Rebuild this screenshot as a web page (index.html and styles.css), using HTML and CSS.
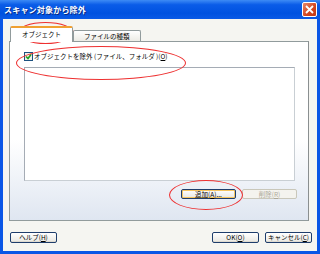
FILE: index.html
```html
<!DOCTYPE html>
<html>
<head>
  <meta charset="UTF-8">
  <title>スキャン対象から除外</title>
  <link rel="stylesheet" href="styles.css">
</head>
<body>
  <div class="window">
    <div class="titlebar">
      <span class="title">スキャン対象から除外</span>
      <span class="close-btn">
        <svg width="9" height="9" viewBox="0 0 9 9"><path d="M1 1 L8 8 M8 1 L1 8" stroke="#fff" stroke-width="1.8"/></svg>
      </span>
    </div>
    <div class="client">
      <div class="tabs">
        <div class="tab active">オブジェクト</div>
        <div class="tab">ファイルの種類</div>
      </div>
      <div class="panel">
        <label class="check-row">
          <span class="checkbox">
            <svg width="7" height="7" viewBox="0 0 7 7"><path d="M1 3.5 L3 5.5 L6.2 1.2" stroke="#21a121" stroke-width="1.6" fill="none"/></svg>
          </span>
          <span>オブジェクトを除外 (ファイル、フォルダ )(<u>O</u>)</span>
        </label>
        <div class="listbox"></div>
        <div class="list-actions">
          <button class="btn focused">追加(<u>A</u>)...</button>
          <button class="btn" disabled>削除(<u>R</u>)</button>
        </div>
      </div>
      <div class="footer">
        <button class="btn">ヘルプ(<u>H</u>)</button>
        <div class="footer-right">
          <button class="btn">OK(<u>O</u>)</button>
          <button class="btn">キャンセル(<u>C</u>)</button>
        </div>
      </div>
    </div>
    <!-- red annotation marks -->
    <div class="mark mark-tab"></div>
    <div class="mark mark-check"></div>
    <div class="mark mark-add"></div>
  </div>
</body>
</html>
```

FILE: styles.css
```css
body {
  margin: 0;
  background: #fff;
  font-family: "Noto Sans CJK JP", "DejaVu Sans", sans-serif;
}

.window {
  position: relative;
  width: 320px;
  height: 254px;
  box-sizing: border-box;
  background: #0a56e6;
  display: flex;
  flex-direction: column;
  overflow: hidden;
}

.titlebar {
  height: 19px;
  display: flex;
  align-items: center;
  justify-content: space-between;
  padding: 0 3px 0 4px;
  background: linear-gradient(#3d8bf5 0%, #0a5ce8 25%, #0052e0 70%, #0a5ae6 100%);
}
.title {
  color: #fff;
  font-size: 8px;
  font-weight: bold;
  letter-spacing: 0.2px;
  text-shadow: 1px 1px 0 #0a2a80;
}
.close-btn {
  width: 13px;
  height: 13px;
  border: 1px solid #fff;
  border-radius: 2px;
  background: linear-gradient(135deg, #e8876a, #d2451e 60%, #c03a18);
  display: flex;
  align-items: center;
  justify-content: center;
}

.client {
  flex: 1;
  margin: 0 3px 3px 3px;
  background: #f5f5f1;
  padding: 9px 8px 0 6px;
  display: flex;
  flex-direction: column;
}

.tabs {
  display: flex;
  align-items: flex-end;
  height: 13px;
  padding-left: 1px;
  position: relative;
  z-index: 1;
}
.tab {
  font-size: 6.5px;
  line-height: 10px;
  height: 10px;
  padding: 0 10px;
  border: 1px solid #919b9c;
  border-bottom: none;
  border-radius: 2px 2px 0 0;
  background: linear-gradient(#fff, #ecebe5);
  color: #000;
  white-space: nowrap;
}
.tab.active {
  height: 13px;
  line-height: 12px;
  padding: 0 11px 1px 11px;
  border-top: 2px solid #f0a030;
  background: #fff;
  margin-bottom: -1px;
}

.panel {
  height: 180px;
  box-sizing: border-box;
  border: 1px solid #919b9c;
  border-right-color: #8a8f90;
  background: linear-gradient(#fff 0%, #fff 55%, #dfe6f1 100%);
  padding: 9px 12px 0 14px;
  display: flex;
  flex-direction: column;
}

.check-row {
  display: flex;
  align-items: center;
  gap: 1px;
  font-size: 6.5px;
  line-height: 10px;
  height: 10px;
  white-space: nowrap;
}
.checkbox {
  width: 7px;
  height: 7px;
  border: 1px solid #1c5180;
  background: #f0f0ea;
  display: flex;
  align-items: center;
  justify-content: center;
}

.listbox {
  margin-top: 6px;
  height: 114px;
  box-sizing: border-box;
  border: 1px solid #a5acb5;
  border-right-color: #c9cfd4;
  border-bottom-color: #c9cfd4;
  background: #fff;
  margin-right: 1px;
}

.list-actions {
  display: flex;
  justify-content: flex-end;
  gap: 6px;
  margin-top: 8px;
  margin-right: -1px;
}

.btn {
  font-family: inherit;
  font-size: 6.5px;
  line-height: 9px;
  height: 11px;
  width: 47px;
  padding: 0;
  border: 1px solid #1e3d6c;
  border-radius: 2px;
  background: linear-gradient(#fff, #ecebe6 85%, #d6d0c5);
  color: #000;
  text-align: center;
  white-space: nowrap;
}
.list-actions .btn {
  width: 55px;
  height: 10px;
  line-height: 8px;
}
.btn.focused {
  box-shadow: inset 0 0 0 1px #f5c560;
}
.btn:disabled {
  border-color: #c9c7ba;
  background: #f4f3ee;
  color: #aca899;
}

.footer {
  display: flex;
  justify-content: space-between;
  margin-top: 11px;
  padding-left: 1px;
  margin-right: -3px;
}
.footer-right {
  display: flex;
  gap: 6px;
}

.mark {
  position: absolute;
  border: 1px solid #ee3030;
  border-radius: 50%;
}
.mark-tab {
  left: 17px;
  top: 22px;
  width: 55px;
  height: 20px;
}
.mark-check {
  left: 16px;
  top: 46px;
  width: 168px;
  height: 32px;
}
.mark-add {
  left: 169px;
  top: 180px;
  width: 72px;
  height: 28px;
}
```
